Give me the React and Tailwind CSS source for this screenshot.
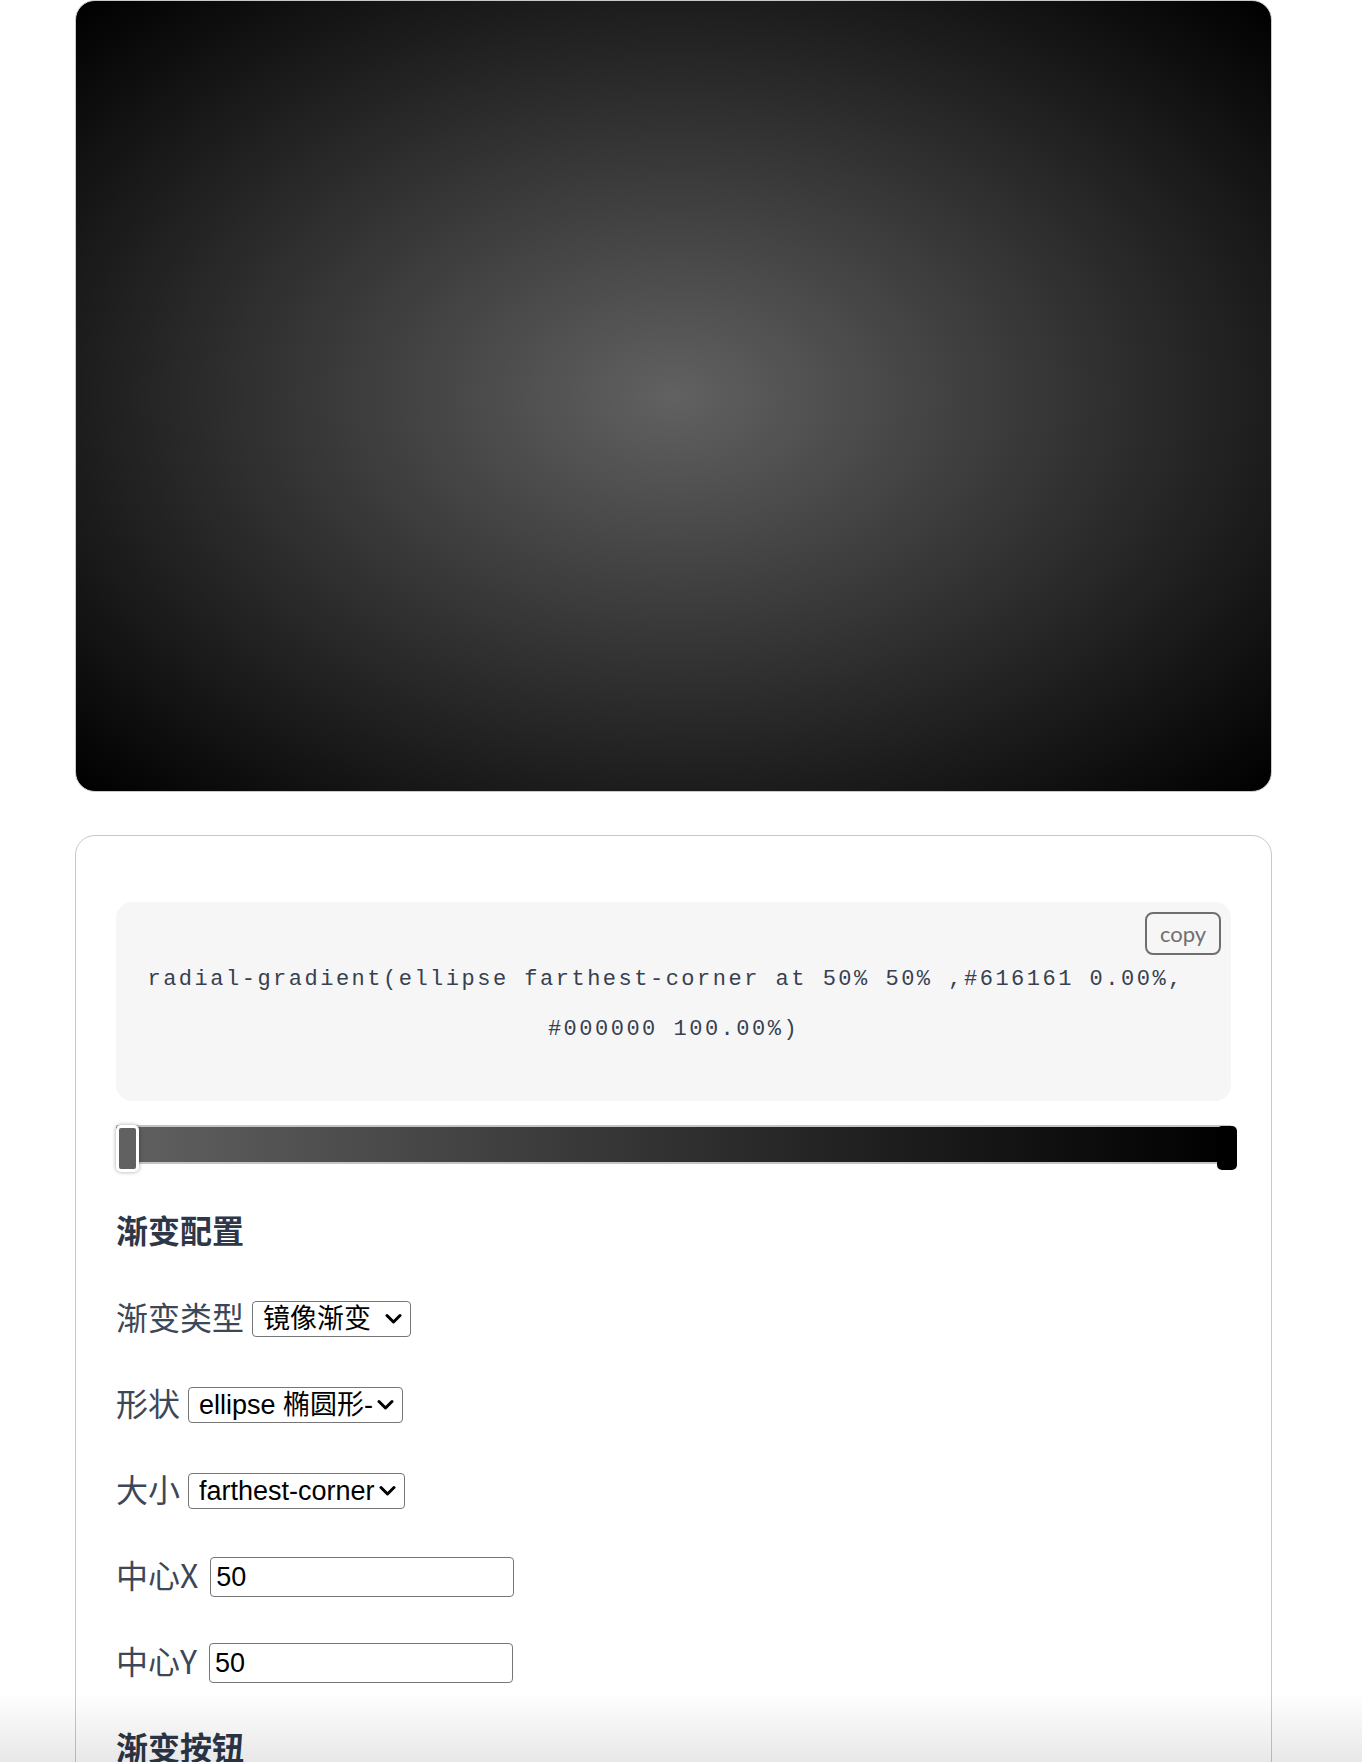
import React, { useState } from 'react';

const cjk = "font-['Noto_Sans_CJK_SC',sans-serif]";
const field = "font-['Liberation_Sans','Noto_Sans_CJK_SC',sans-serif]";

const Chevron = () => (
    <svg width="17" height="11" viewBox="0 0 17 11" className="pointer-events-none absolute right-[9px] top-1/2 -translate-y-1/2">
        <path d="M2 2 L8.5 8.5 L15 2" fill="none" stroke="#000" strokeWidth="3" strokeLinecap="round" strokeLinejoin="round" />
    </svg>
);

const SelectField = ({ value, onChange, options, width }) => (
    <div className={`relative ${width}`}>
        <select
            value={value}
            onChange={(e) => onChange(e.target.value)}
            className={`${field} block h-[36px] w-full appearance-none rounded-[4px] border border-[#767676] bg-white pl-[10px] pr-[26px] text-[27px] leading-[34px] text-black outline-none`}
        >
            {options.map((o) => (
                <option key={o.value} value={o.value}>{o.label}</option>
            ))}
        </select>
        <Chevron />
    </div>
);

const Row = ({ label, children }) => (
    <div className="flex h-[86px] items-center gap-2">
        <span className={`${cjk} -mt-[6px] text-[32px] leading-none text-[#3d4757]`}>{label}</span>
        {children}
    </div>
);

const inputCls = `${field} ml-[4px] h-[40px] w-[304px] rounded-[4px] border border-[#767676] px-[5px] text-[27px] text-black outline-none`;

const App = () => {
    const [type, setType] = useState('radial');
    const [shape, setShape] = useState('ellipse');
    const [size, setSize] = useState('farthest-corner');
    const [cx, setCx] = useState('50');
    const [cy, setCy] = useState('50');

    return (
        <div className="min-h-screen bg-white">
            <div className="ml-[75px] w-[1197px]">
                {/* preview */}
                <div className="h-[792px] rounded-[20px] border border-[#c9c9c9] bg-[radial-gradient(ellipse_farthest-corner_at_50%_50%,#616161_0%,#000000_100%)]" />

                <div className="mt-[43px] rounded-[20px] border border-[#c8c8c8] px-[40px] pt-[66px] pb-[60px]">
                    {/* css output */}
                    <div className="relative h-[199px] rounded-[16px] bg-[#f6f6f6] px-[10px] pt-[53px]">
                        <button className="absolute right-[10px] top-[10px] h-[43px] w-[76px] rounded-[8px] border-2 border-[#6f6f6f] font-['Lato',sans-serif] text-[22px] leading-none text-[#6f6f6f]">
                            copy
                        </button>
                        <p className="text-center font-['Liberation_Mono',monospace] text-[22px] leading-[50px] tracking-[2.5px] text-[#374151]">
                            radial-gradient(ellipse farthest-corner at 50% 50% ,#616161 0.00%,{'\u00a0'}
                            <br />
                            #000000 100.00%)
                        </p>
                    </div>

                    {/* color stops */}
                    <div className="relative mt-[24px] h-[47px]">
                        <div className="mt-[3px] h-[39px] border-y-2 border-[#c4c4c4] bg-[linear-gradient(to_right,#616161,#000000)]" />
                        <div className="absolute left-0 top-0 h-[47px] w-[23px] rounded-[5px] border-[3px] border-white bg-[#616161] shadow-[0_0_4px_rgba(0,0,0,0.35)]" />
                        <div className="absolute right-[-6px] top-[1px] h-[44px] w-[20px] rounded-[5px] bg-black" />
                    </div>

                    <div className="mt-[16px]">
                        <div className="flex h-[88px] items-center">
                            <h3 className={`${cjk} -mt-[6px] text-[32px] font-bold leading-none text-[#2d3748]`}>渐变配置</h3>
                        </div>
                        <Row label="渐变类型">
                            <SelectField
                                value={type}
                                onChange={setType}
                                width="w-[159px]"
                                options={[
                                    { value: 'linear', label: '线性渐变' },
                                    { value: 'radial', label: '镜像渐变' },
                                ]}
                            />
                        </Row>
                        <Row label="形状">
                            <SelectField
                                value={shape}
                                onChange={setShape}
                                width="w-[215px]"
                                options={[
                                    { value: 'ellipse', label: 'ellipse 椭圆形-' },
                                    { value: 'circle', label: 'circle 圆形' },
                                ]}
                            />
                        </Row>
                        <Row label="大小">
                            <SelectField
                                value={size}
                                onChange={setSize}
                                width="w-[217px]"
                                options={[
                                    { value: 'closest-side', label: 'closest-side' },
                                    { value: 'closest-corner', label: 'closest-corner' },
                                    { value: 'farthest-side', label: 'farthest-side' },
                                    { value: 'farthest-corner', label: 'farthest-corner' },
                                ]}
                            />
                        </Row>
                        <Row label="中心X">
                            <input value={cx} onChange={(e) => setCx(e.target.value)} className={inputCls} />
                        </Row>
                        <Row label="中心Y">
                            <input value={cy} onChange={(e) => setCy(e.target.value)} className={inputCls} />
                        </Row>
                        <div className="flex h-[86px] items-center">
                            <h3 className={`${cjk} -mt-[6px] text-[32px] font-bold leading-none text-[#2d3748]`}>渐变按钮</h3>
                        </div>
                    </div>
                </div>
            </div>

            {/* bottom fade */}
            <div className="pointer-events-none fixed inset-x-0 bottom-0 h-[70px] bg-[linear-gradient(to_bottom,rgba(0,0,0,0),rgba(0,0,0,0.09))]" />
        </div>
    );
};

export default App;
